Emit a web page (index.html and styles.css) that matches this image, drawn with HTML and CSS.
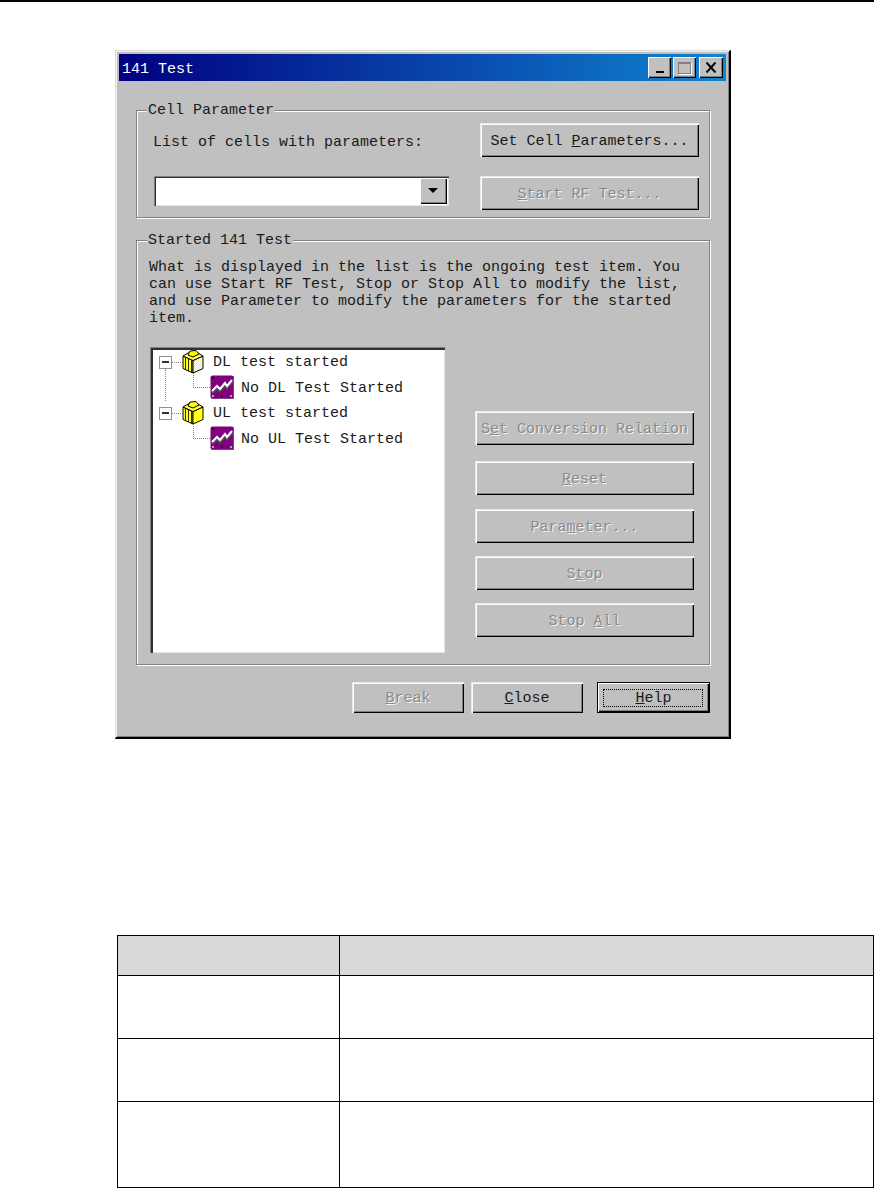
FILE: index.html
```html
<!DOCTYPE html>
<html>
<head>
    <title>141 Test</title>
    <link rel="stylesheet" href="styles.css">
</head>
<body>
    <div class="top-rule"></div>

    <svg class="defs" width="0" height="0">
        <defs>
            <pattern id="dither" width="2" height="2" patternUnits="userSpaceOnUse">
                <rect width="2" height="2" fill="#ffff00"/>
                <rect width="1" height="1" fill="#fffff0"/>
                <rect x="1" y="1" width="1" height="1" fill="#fffff0"/>
            </pattern>
            <pattern id="stripes" width="3" height="2" patternUnits="userSpaceOnUse">
                <rect width="3" height="2" fill="#ffff20"/>
                <rect width="1" height="2" fill="#303010"/>
            </pattern>
            <symbol id="icon-box" viewBox="0 0 22 24">
                <path d="M1 6 11 10.500V23L1 18.500Z" fill="url(#stripes)" stroke="#000"/>
                <path d="M11 10.500 21 6V18.500L11 23Z" fill="url(#dither)" stroke="#000"/>
                <path d="M1 6 6 3 16 3 21 6 11 10.500Z" fill="#ffff50" stroke="#000"/>
                <path d="M6 5 8 1 14 0.500 17 4 11 7Z" fill="#ffff00" stroke="#000"/>
            </symbol>
            <symbol id="icon-chart" viewBox="0 0 24 24">
                <rect x="0.500" y="0.500" width="23" height="23" rx="2" fill="#800080"/>
                <path d="M1 24H22Q24 24 24 22V1" fill="none" stroke="#4a004a"/>
                <path d="M2 18 7 13 10 16 15 10 17 13 22 7" fill="none" stroke="#505050" stroke-width="2.500"/>
                <path d="M2 16 7 11 10 14 15 8 17 11 22 5" fill="none" stroke="#fff" stroke-width="2"/>
                <circle cx="3" cy="3" r="1" fill="#1a001a"/>
                <circle cx="3" cy="21" r="1" fill="#e0c0e0"/>
                <circle cx="21" cy="21" r="1" fill="#e0c0e0"/>
                <circle cx="12" cy="21" r="1" fill="#1a001a"/>
            </symbol>
        </defs>
    </svg>

    <div class="dialog">
        <div class="title-bar">
            <span class="title-text">141 Test</span>
            <div class="window-buttons">
                <div class="win-btn win-min"><span class="min-mark"></span></div>
                <div class="win-btn win-max"><span class="max-mark"></span></div>
                <div class="win-btn win-close">
                    <svg width="12" height="11" viewBox="0 0 12 11">
                        <path d="M1.500 0.500 10.500 10.500M10.500 0.500 1.500 10.500" stroke="#000" stroke-width="2" fill="none"/>
                    </svg>
                </div>
            </div>
        </div>

        <div class="dialog-body">
            <fieldset class="group">
                <legend>Cell Parameter</legend>
                <div class="cell-grid">
                    <div class="cell-label">List of cells with parameters:</div>
                    <button class="btn btn-tall">Set Cell <u>P</u>arameters...</button>
                    <div class="combo">
                        <div class="combo-arrow"></div>
                    </div>
                    <button class="btn btn-tall" disabled><u>S</u>tart RF Test...</button>
                </div>
            </fieldset>

            <fieldset class="group group-started">
                <legend>Started 141 Test</legend>
                <p class="note">What is displayed in the list is the ongoing test item. You<br>can use Start RF Test, Stop or Stop All to modify the list,<br>and use Parameter to modify the parameters for the started<br>item.</p>
                <div class="test-area">
                    <div class="tree">
                        <div class="tree-row tree-parent has-next">
                            <span class="expander"></span>
                            <svg class="icon-box" width="22" height="24"><use href="#icon-box"/></svg>
                            <span class="tree-text">DL test started</span>
                        </div>
                        <div class="tree-row tree-child">
                            <svg class="icon-chart" width="24" height="24"><use href="#icon-chart"/></svg>
                            <span class="tree-text">No DL Test Started</span>
                        </div>
                        <div class="tree-row tree-parent">
                            <span class="expander"></span>
                            <svg class="icon-box" width="22" height="24"><use href="#icon-box"/></svg>
                            <span class="tree-text">UL test started</span>
                        </div>
                        <div class="tree-row tree-child">
                            <svg class="icon-chart" width="24" height="24"><use href="#icon-chart"/></svg>
                            <span class="tree-text">No UL Test Started</span>
                        </div>
                    </div>
                    <div class="side-buttons">
                        <button class="btn btn-tall gap-lg" disabled>S<u>e</u>t Conversion Relation</button>
                        <button class="btn btn-tall gap-md" disabled><u>R</u>eset</button>
                        <button class="btn btn-tall" disabled>Para<u>m</u>eter...</button>
                        <button class="btn btn-tall" disabled>S<u>t</u>op</button>
                        <button class="btn btn-tall" disabled>Stop <u>A</u>ll</button>
                    </div>
                </div>
            </fieldset>

            <div class="footer">
                <button class="btn btn-foot" disabled><u>B</u>reak</button>
                <button class="btn btn-foot"><u>C</u>lose</button>
                <button class="btn btn-foot btn-default"><u>H</u>elp</button>
            </div>
        </div>
    </div>

    <table class="param-table">
        <colgroup>
            <col class="col-name">
            <col>
        </colgroup>
        <tr class="row-head"><th></th><th></th></tr>
        <tr class="row-two"><td></td><td></td></tr>
        <tr class="row-two"><td></td><td></td></tr>
        <tr class="row-three"><td></td><td></td></tr>
    </table>
</body>
</html>
```

FILE: styles.css
```css
body {
    margin: 0;
    background-color: white;
    font-family: "Liberation Mono", monospace;
    font-size: 15px;
    color: #1a1a1a;
}

.top-rule {
    height: 2px;
    background-color: black;
}

.defs {
    display: block;
    height: 0;
}

/* Dialog window */
.dialog {
    box-sizing: border-box;
    width: 616px;
    height: 689px;
    margin: 48px 0 0 115px;
    padding: 3px 3px 0 3px;
    background-color: #c0c0c0;
    border-top: 1px solid #dcdcdc;
    border-left: 1px solid #dcdcdc;
    border-right: 2px solid black;
    border-bottom: 2px solid black;
    box-shadow: inset 1px 1px 0 #f0f0f0, inset -1px -1px 0 #808080;
}

.title-bar {
    display: flex;
    align-items: center;
    justify-content: space-between;
    height: 27px;
    padding: 0 3px;
    background: linear-gradient(to right, #000080, #1084d0);
}

.title-text {
    padding-top: 3px;
    color: white;
}

.window-buttons {
    display: flex;
}

.win-btn {
    display: flex;
    align-items: center;
    justify-content: center;
    box-sizing: border-box;
    width: 23px;
    height: 21px;
    background-color: #c0c0c0;
    box-shadow: inset 1px 1px 0 white, inset -1px -1px 0 black, inset -2px -2px 0 #808080;
}

.win-max {
    margin: 0 3px 0 2px;
}

.win-close {
    width: 24px;
}

.min-mark {
    width: 8px;
    height: 2px;
    margin-top: 9px;
    background-color: black;
}

.max-mark {
    box-sizing: border-box;
    width: 13px;
    height: 12px;
    border: 1px solid #808080;
    border-top-width: 2px;
    box-shadow: 1px 1px 0 white;
}

.dialog-body {
    padding: 20px 16px 0 17px;
}

/* Group boxes */
.group {
    margin: 0;
    padding: 0;
    border: 1px solid #808080;
    box-shadow: 1px 1px 0 white, inset 1px 1px 0 white;
}

.group legend {
    margin-left: 10px;
    padding: 1px 1px 0 1px;
    line-height: 17px;
    background-color: #c0c0c0;
}

.cell-grid {
    display: grid;
    grid-template-columns: 295px 219px;
    grid-template-rows: 34px 34px;
    justify-content: space-between;
    row-gap: 19px;
    padding: 4px 10px 7px 17px;
}

.cell-label {
    align-self: center;
    margin: 4px 0 0 -1px;
}

.combo {
    display: flex;
    justify-content: flex-end;
    align-items: center;
    box-sizing: border-box;
    height: 30px;
    padding-right: 2px;
    background-color: white;
    box-shadow: inset 1px 1px 0 #808080, inset 2px 2px 0 #303030, inset -1px -1px 0 #e4e4e4;
}

.combo-arrow {
    position: relative;
    box-sizing: border-box;
    width: 27px;
    height: 26px;
    background-color: #c0c0c0;
    box-shadow: inset 1px 1px 0 white, inset -1px -1px 0 black, inset -2px -2px 0 #808080;
}

.combo-arrow::after {
    content: "";
    position: absolute;
    left: 8px;
    top: 10px;
    border-left: 5px solid transparent;
    border-right: 5px solid transparent;
    border-top: 5px solid black;
}

/* Buttons */
.btn {
    box-sizing: border-box;
    padding: 2px 0 0 0;
    border: none;
    background-color: #c0c0c0;
    font-family: inherit;
    font-size: 15px;
    color: #1a1a1a;
    box-shadow: inset 1px 1px 0 #e8e8e8, inset 2px 2px 0 white, inset -1px -1px 0 black, inset -2px -2px 0 #808080;
}

.btn:disabled {
    color: #8a8a8a;
    text-shadow: 1px 1px 0 #f4f4f4;
}

.btn-tall {
    width: 219px;
    height: 34px;
}

.btn-foot {
    width: 112px;
    height: 31px;
}

.btn-default {
    position: relative;
    width: 113px;
    margin-left: 7px;
    border: 1px solid black;
    box-shadow: inset 1px 1px 0 white, inset -1px -1px 0 black, inset -2px -2px 0 #808080;
}

.btn-default::after {
    content: "";
    position: absolute;
    top: 6px;
    left: 5px;
    right: 6px;
    bottom: 5px;
    border: 1px dotted black;
}

.group-started {
    margin-top: 13px;
}

.note {
    margin: 0;
    padding: 10px 12px 0 12px;
    line-height: 17px;
    white-space: nowrap;
}

.test-area {
    display: flex;
    gap: 30px;
    padding: 20px 15px 11px 13px;
}

/* Tree list */
.tree {
    box-sizing: border-box;
    width: 295px;
    height: 306px;
    padding: 2px 2px 0 9px;
    background-color: white;
    box-shadow: inset 1px 1px 0 #808080, inset 3px 3px 0 #303030, inset -1px -1px 0 #e4e4e4;
}

.tree-row {
    position: relative;
    display: flex;
    align-items: center;
    height: 25.500px;
}

.tree-text {
    padding-top: 2px;
}

.tree-parent {
    padding-left: 23px;
}

.tree-parent .icon-box {
    margin-right: 9px;
}

.tree-child {
    padding-left: 51px;
}

.tree-child .icon-chart {
    margin-right: 7px;
}

.expander {
    position: absolute;
    left: 0;
    top: 7px;
    box-sizing: border-box;
    width: 13px;
    height: 13px;
    background-color: white;
    border: 1px solid #909090;
}

.expander::before {
    content: "";
    position: absolute;
    left: 2px;
    top: 4px;
    width: 7px;
    height: 2px;
    background-color: #303030;
}

/* Dotted connectors */
.expander::after {
    content: "";
    position: absolute;
    left: 11px;
    top: 5px;
    width: 10px;
    border-top: 1px dotted #808080;
}

.has-next::after {
    content: "";
    position: absolute;
    left: 6px;
    top: 20px;
    height: 32px;
    border-left: 1px dotted #808080;
}

.tree-child::before {
    content: "";
    position: absolute;
    left: 34px;
    top: -2px;
    width: 17px;
    height: 15px;
    border-left: 1px dotted #808080;
    border-bottom: 1px dotted #808080;
    box-sizing: border-box;
}

.side-buttons {
    display: flex;
    flex-direction: column;
    gap: 13px;
    padding-top: 64px;
}

.gap-lg {
    margin-bottom: 3px;
}

.gap-md {
    margin-bottom: 1px;
}

.footer {
    display: flex;
    justify-content: flex-end;
    gap: 7px;
    margin-top: 17px;
}

/* Table below the dialog */
.param-table {
    width: 757px;
    margin: 196px 0 0 117px;
    border-collapse: collapse;
    table-layout: fixed;
}

.param-table th,
.param-table td {
    padding: 0;
    border: 1px solid black;
}

.param-table th {
    background-color: #d9d9d9;
}

.col-name {
    width: 222px;
}

.row-head {
    height: 40px;
}

.row-two {
    height: 63px;
}

.row-three {
    height: 86px;
}
```
